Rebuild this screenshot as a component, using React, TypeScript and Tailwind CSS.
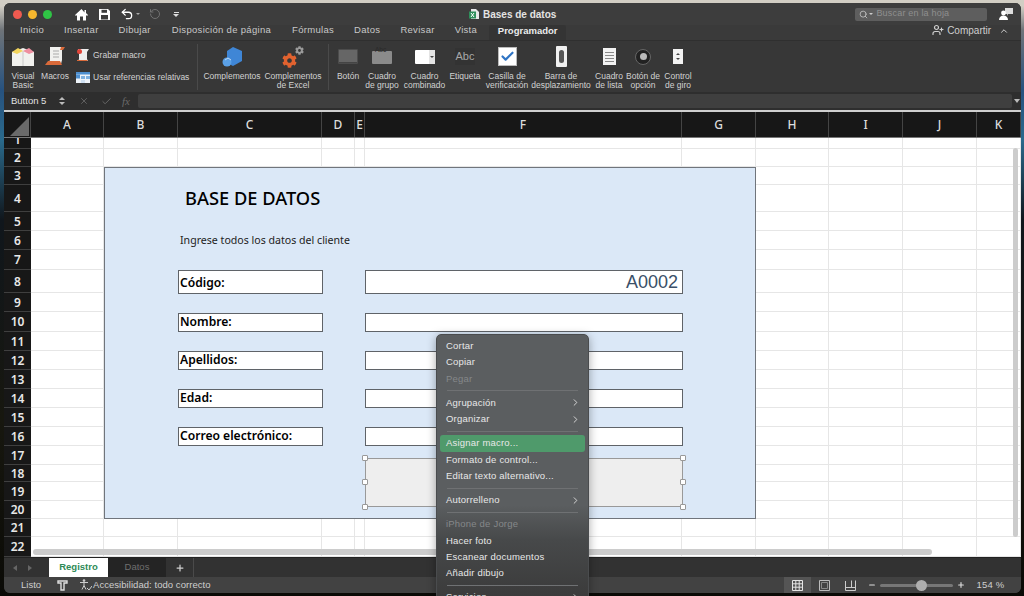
import { Undo2, RotateCcw, Search, ChevronUp, ChevronRight, X, Check, Plus, Minus, UserPlus } from "lucide-react";
import { FaCog } from "react-icons/fa";
import type { ReactNode } from "react";

const colsLabels: [string, string][] = [
  ["A", "w-[73px]"], ["B", "w-[74px]"], ["C", "w-[144px]"], ["D", "w-[33px]"], ["E", "w-[10px]"], ["F", "w-[317px]"],
  ["G", "w-[74px]"], ["H", "w-[73px]"], ["I", "w-[74px]"], ["J", "w-[74px]"], ["K", "w-[44px]"],
];
const rowH = [11, 18, 18, 27, 19, 19, 20, 23, 19, 20, 19, 19, 19, 19, 19, 19, 19, 17, 19, 18, 18, 20];

function Rib({ w, ml, icon, children }: { w: string; ml: string; icon: ReactNode; children: ReactNode }) {
  return (
    <div className={`${w} ${ml} flex flex-col items-center shrink-0`}>
      <div className="h-[31px] flex items-center justify-center w-full">{icon}</div>
      <div className="text-center text-[8.5px] leading-[9px] text-[#d2d2d2] whitespace-nowrap">{children}</div>
    </div>
  );
}

const Sep = () => <div className="h-[8px] flex items-center px-[10px]"><div className="h-px w-full bg-[#6f7173]" /></div>;
function MI({ t, dim, arrow, on }: { t: string; dim?: boolean; arrow?: boolean; on?: boolean }) {
  return (
    <div className={`h-[16.25px] mx-[3px] pl-[6px] pr-[4px] flex items-center justify-between text-[9.5px] tracking-[0.2px] rounded-[3px] ${dim ? "text-[#85888a]" : "text-[#e8e8e8]"} ${on ? "bg-[#4f9a6b]" : ""}`}>
      <span>{t}</span>
      {arrow && <ChevronRight size={11} strokeWidth={2} className="text-[#dddddd]" />}
    </div>
  );
}
const Handle = ({ c }: { c: string }) => <div className={`absolute w-[6px] h-[6px] bg-white border border-[#999] rounded-[1px] ${c}`} />;

function Field({ label, mt, h, value, lp = "" }: { label: string; mt: string; h: string; value?: string; lp?: string }) {
  return (
    <div className={`flex ${mt} ${h} ml-[73px]`}>
      <div className={`w-[145px] bg-white border border-[#5f6368] flex items-center pl-[1px] text-[12.1px] font-semibold text-black ${lp}`}>{label}</div>
      <div className="ml-[42px] w-[318px] bg-white border border-[#5f6368] flex items-center justify-end pr-[4px] text-[18px] text-[#3a5068] font-['Liberation_Sans',sans-serif]">{value}</div>
    </div>
  );
}

export default function App() {
  return (
    <div className="relative w-[1024px] h-[596px] overflow-hidden bg-[linear-gradient(180deg,#d2cec4_0px,#d2cec4_6px,#6f7479_30px,#27527f_90px,#2a6a8c_140px,#10161c_220px,#17170f_420px,#0a0a06_596px)] font-['Liberation_Sans',sans-serif] pt-[3px] pl-[4px]">
      <div className="w-[1017px] h-[590px] rounded-[6px] overflow-hidden bg-[#393939] flex flex-col">
        {/* Title bar */}
        <div className="h-[22px] shrink-0 bg-[#3d3d3d] flex items-center">
          <div className="ml-[9px] w-[9px] h-[9px] rounded-full bg-[#ef5a50]" />
          <div className="ml-[6px] w-[9px] h-[9px] rounded-full bg-[#f5b62e]" />
          <div className="ml-[6px] w-[9px] h-[9px] rounded-full bg-[#2fc445]" />
          <svg width="13" height="13" viewBox="0 0 13 13" className="ml-[23px] shrink-0"><path d="M6.5 1L0 7l1 1 1-.9V12.5h3V8.5h3v4h3V7.1l1 .9 1-1-2-1.9V2H9.5v2.5z" fill="#fff" /></svg>
          <svg width="13" height="13" viewBox="0 0 13 13" className="ml-[10px] shrink-0"><path d="M1 1h9l2 2v9H1z" fill="#fff" /><rect x="3.5" y="1.8" width="5.5" height="3" fill="#3d3d3d" /><rect x="3" y="7" width="7" height="4.5" fill="#3d3d3d" /></svg>
          <Undo2 size={14} strokeWidth={2.2} className="ml-[9px] text-white" />
          <div className="ml-[2px] w-0 h-0 border-x-[2px] border-x-transparent border-t-[2px] border-t-[#aaa]" />
          <RotateCcw size={12} strokeWidth={1.8} className="ml-[9px] text-[#777]" />
          <div className="ml-[12px] flex flex-col gap-[1px] items-center">
            <div className="w-[5px] h-px bg-[#ddd]" />
            <div className="w-0 h-0 border-x-[3px] border-x-transparent border-t-[3px] border-t-[#ddd]" />
          </div>
          <svg width="11" height="12" viewBox="0 0 11 12" className="ml-[290px] shrink-0">
            <path d="M2 1h5l3 3v7H2z" fill="#e8e8e8" /><rect x="0" y="3.5" width="7" height="7" fill="#2f8f5b" /><path d="M2 5l3 4M5 5L2 9" stroke="#fff" />
          </svg>
          <div className="ml-[3px] text-[10px] font-bold text-[#e4e4e4] whitespace-nowrap">Bases de datos</div>
          <div className="ml-[299px] w-[132px] h-[13px] bg-[#5e5e5e] rounded-[2px] flex items-center pl-[4px]">
            <Search size={9} strokeWidth={2} className="text-[#d0d0d0]" />
            <div className="ml-[1px] w-0 h-0 border-x-[2px] border-x-transparent border-t-[2px] border-t-[#ccc]" />
            <span className="ml-[3px] text-[9px] tracking-[0.2px] text-[#8f8f8f] whitespace-nowrap">Buscar en la hoja</span>
          </div>
          <svg width="14" height="14" viewBox="0 0 14 14" className="ml-[12px]">
            <path d="M6 1h8v6H9L8 9V7H6z" fill="#ddd" /><circle cx="4.5" cy="6" r="2.4" fill="#fff" /><path d="M0 13c0-3 2-4.5 4.5-4.5S9 10 9 13z" fill="#fff" />
          </svg>
        </div>
        {/* Tabs */}
        <div className="h-[15px] shrink-0 bg-[#3a3a3a] flex items-center text-[9.5px] tracking-[0.3px] text-[#c8c8c8]">
          <div className="ml-[16px] pb-[4px]">Inicio</div>
          <div className="ml-[20px] pb-[4px]">Insertar</div>
          <div className="ml-[20px] pb-[4px]">Dibujar</div>
          <div className="ml-[21px] pb-[4px] whitespace-nowrap">Disposición de página</div>
          <div className="ml-[21px] pb-[4px]">Fórmulas</div>
          <div className="ml-[20px] pb-[4px]">Datos</div>
          <div className="ml-[20px] pb-[4px]">Revisar</div>
          <div className="ml-[20px] pb-[4px]">Vista</div>
          <div className="ml-[12px] w-[77px] h-full bg-[#343434] flex items-center justify-center rounded-t-[2px] font-bold tracking-normal text-[#ececec] pb-[3px]">Programador</div>
          <UserPlus size={12} strokeWidth={2.4} className="ml-[366px] mb-[5px] text-[#cfcfcf] shrink-0" />
          <div className="ml-[3px] pb-[5px] text-[10px] tracking-normal text-[#cfcfcf]">Compartir</div>
          <ChevronUp size={10} strokeWidth={2.4} className="ml-[8px] mb-[4px] text-[#cfcfcf] shrink-0" />
        </div>
        {/* Ribbon */}
        <div className="h-[52px] shrink-0 bg-[#373737] border-t border-[#2f2f2f] flex items-start">
          <Rib w="w-[26px]" ml="ml-[6px]" icon={
            <svg width="24" height="21" viewBox="0 0 24 21"><path d="M1 6l11-4 11 4v14H1z" fill="#f1f1ee" /><path d="M12 5v15" stroke="#c9c9c9" /><path d="M1 6l6-4 5 3-6 3z" fill="#f2d45c" /><path d="M23 6l-5-4-6 3 6 3z" fill="#ef8fa0" /></svg>
          }>Visual<br />Basic</Rib>
          <Rib w="w-[30px]" ml="ml-[4px]" icon={
            <svg width="22" height="21" viewBox="0 0 22 21"><path d="M6 1h14l-2 3v10l-1 4H4l2-4z" fill="#f0f0ee" /><path d="M9 5h6M9 8h6M9 11h6" stroke="#aaa" /><path d="M1 19l3-4h12l2 4z" fill="#d96a3a" /><path d="M17 1h4l-2 3h-3z" fill="#d96a3a" /></svg>
          }><span className="block">Macros</span></Rib>
          <div className="ml-[6px] w-[112px] shrink-0 text-[8.5px] text-[#d2d2d2]">
            <div className="h-[22px] mt-[3px] flex items-center">
              <svg width="14" height="14" viewBox="0 0 14 14" className="shrink-0"><path d="M2 1h11l-2 3v7l1 2H2l1-2V4z" fill="#eee" /><circle cx="3.5" cy="3.5" r="2.5" fill="#e0453a" /><path d="M1 12h10l1 1H1z" fill="#d96a3a" /></svg>
              <span className="ml-[3px]">Grabar macro</span>
            </div>
            <div className="h-[22px] flex items-center whitespace-nowrap">
              <svg width="14" height="11" viewBox="0 0 14 11" className="shrink-0"><rect width="14" height="11" fill="#eef3f9" /><rect width="14" height="2.5" fill="#4d8fd0" /><rect x="0" y="2.5" width="4" height="4" fill="#4d8fd0" /><rect x="5" y="4" width="4" height="3" fill="#7fb1e0" /><rect x="10" y="4" width="4" height="3" fill="#7fb1e0" /><rect x="5" y="8" width="4" height="3" fill="#cfe0f2" /></svg>
              <span className="ml-[3px]">Usar referencias relativas</span>
            </div>
          </div>
          <div className="ml-[9px] w-px h-[46px] mt-[3px] bg-[#4a4a4a] shrink-0" />
          <Rib w="w-[56px]" ml="ml-[6px]" icon={
            <svg width="21" height="22" viewBox="0 0 21 22"><path d="M11 1l9 4v10l-9 5-6-3V5z" fill="#3f86d6" /><circle cx="5" cy="16" r="4.5" fill="#5aa0e6" /><path d="M3 14l3-2 3 2" stroke="#d7e7f7" strokeWidth="0.8" fill="none" /></svg>
          }>Complementos</Rib>
          <Rib w="w-[56px]" ml="ml-[5px]" icon={
            <div className="relative w-[22px] h-[22px]">
              <FaCog size={15} className="absolute left-0 bottom-0 text-[#e1622f]" />
              <FaCog size={9} className="absolute right-0 top-0 text-[#9a9a9a]" />
            </div>
          }>Complementos<br />de Excel</Rib>
          <div className="ml-[7px] w-px h-[46px] mt-[3px] bg-[#4a4a4a] shrink-0" />
          <Rib w="w-[24px]" ml="ml-[7px]" icon={<div className="w-[20px] h-[15px] bg-[#666] rounded-[1px] border border-[#4c4c4c] shadow-[inset_0_-1px_0_#444]" />}>Botón</Rib>
          <Rib w="w-[36px]" ml="ml-[4px]" icon={
            <div className="relative w-[20px] h-[13px] mt-[2px] bg-[#8b8b8b] rounded-[1px]">
              <span className="absolute -top-[5px] left-[3px] text-[6.5px] leading-[7px] text-[#2a2a2a]">Abc</span>
            </div>
          }>Cuadro<br />de grupo</Rib>
          <Rib w="w-[41px]" ml="ml-[4px]" icon={
            <div className="w-[20px] h-[14px] bg-white flex justify-end items-center rounded-[1px]">
              <div className="w-[6px] h-full bg-[#e4e4e4] flex items-center justify-center"><div className="w-0 h-0 border-x-[2px] border-x-transparent border-t-[2px] border-t-[#444]" /></div>
            </div>
          }>Cuadro<br />combinado</Rib>
          <Rib w="w-[32px]" ml="ml-[4px]" icon={<div className="text-[11px] text-[#a8a8a8] bg-[#333] px-[1px]">Abc</div>}>Etiqueta</Rib>
          <Rib w="w-[44px]" ml="ml-[4px]" icon={
            <div className="w-[19px] h-[19px] bg-white border border-[#bbb] flex items-center justify-center"><Check size={15} strokeWidth={3.4} className="text-[#2f74c4]" /></div>
          }>Casilla de<br />verificación</Rib>
          <Rib w="w-[58px]" ml="ml-[3px]" icon={
            <div className="w-[11px] h-[21px] bg-[#f0f0f0] flex items-center justify-center rounded-[1px]"><div className="w-[5px] h-[13px] bg-[#555] rounded-full" /></div>
          }>Barra de<br />desplazamiento</Rib>
          <Rib w="w-[30px]" ml="ml-[4px]" icon={
            <div className="w-[13px] h-[17px] bg-[#f2f2f2] flex flex-col justify-center gap-[2px] px-[2px]">
              <div className="h-px bg-[#888]" /><div className="h-px bg-[#888]" /><div className="h-px bg-[#888]" /><div className="h-px bg-[#888]" />
            </div>
          }>Cuadro<br />de lista</Rib>
          <Rib w="w-[34px]" ml="ml-[2px]" icon={
            <div className="w-[16px] h-[16px] rounded-full bg-[#222] border border-[#666] flex items-center justify-center"><div className="w-[7px] h-[7px] rounded-full bg-[#bbb]" /></div>
          }>Botón de<br />opción</Rib>
          <Rib w="w-[32px]" ml="ml-[2px]" icon={
            <div className="w-[10px] h-[15px] bg-[#f2f2f2] flex flex-col items-center justify-center gap-[3px]">
              <div className="w-0 h-0 border-x-[2px] border-x-transparent border-b-[2px] border-b-[#444]" />
              <div className="w-0 h-0 border-x-[2px] border-x-transparent border-t-[2px] border-t-[#444]" />
            </div>
          }>Control<br />de giro</Rib>
        </div>
        {/* Formula bar */}
        <div className="h-[18px] shrink-0 bg-[#2e2e2e] flex items-center">
          <div className="w-[48px] pl-[7px] text-[9.5px] text-[#e2e2e2] whitespace-nowrap">Button 5</div>
          <div className="ml-[7px] flex flex-col gap-[2px]">
            <div className="w-0 h-0 border-x-[3px] border-x-transparent border-b-[3px] border-b-[#bbb]" />
            <div className="w-0 h-0 border-x-[3px] border-x-transparent border-t-[3px] border-t-[#bbb]" />
          </div>
          <X size={10} strokeWidth={2} className="ml-[14px] text-[#6a6a6a]" />
          <Check size={11} strokeWidth={2} className="ml-[12px] text-[#6a6a6a]" />
          <span className="ml-[10px] w-[12px] text-[11px] italic font-['Liberation_Serif',serif] text-[#6a6a6a]">fx</span>
          <div className="ml-[4px] w-[874px] h-[14px] bg-[#3f3f3f] rounded-[2px]" />
          <div className="ml-[2px] w-0 h-0 border-x-[3px] border-x-transparent border-t-[4px] border-t-[#bbb]" />
        </div>
        <div className="h-[2px] shrink-0 bg-[#cfcfcf]" />
        {/* Column headers */}
        <div className="h-[26px] shrink-0 bg-[#171717] flex border-b border-[#777]">
          <div className="w-[27px] shrink-0 border-r border-[#444] flex items-end justify-end pb-[1px] pr-[1px]">
            <div className="w-0 h-0 border-l-[19px] border-l-transparent border-b-[19px] border-b-[#6a6a6a]" />
          </div>
          {colsLabels.map(([l, w]) => (
            <div key={l} className={`${w} shrink-0 border-r border-[#444] flex items-center justify-center text-[12px] font-medium text-[#dddddd] font-['Noto_Sans',sans-serif]`}>{l}</div>
          ))}
        </div>
        {/* Sheet */}
        <div className="relative h-[419px] shrink-0 bg-white overflow-hidden">
          {rowH.map((h, i) => (
            <div key={i} className="flex" style={{ height: h }}>
              <div className="w-[27px] shrink-0 bg-[#171717] border-b border-[#3f3f3f] flex items-center justify-center overflow-hidden text-[12px] font-semibold text-[#e8e8e8] font-['Noto_Sans',sans-serif]">
                <span className={i === 0 ? "-mt-[6px]" : "pt-[1px]"}>{i + 1}</span>
              </div>
              {colsLabels.map(([l, w]) => (
                <div key={l} className={`${w} shrink-0 border-r border-b border-[#e6e6e6]`} />
              ))}
            </div>
          ))}
          {/* Form shape floating over the sheet */}
          <div className="absolute left-[100px] top-[29px] w-[652px] h-[352px] bg-[#dbe8f7] border border-[#70757c] font-['Noto_Sans',sans-serif]">
            <div className="mt-[17px] ml-[80px] h-[26px] flex items-center text-[18.3px] font-medium text-black whitespace-nowrap">BASE DE DATOS</div>
            <div className="mt-[21px] ml-[75px] h-[18px] flex items-center text-[10.6px] text-[#222] whitespace-nowrap">Ingrese todos los datos del cliente</div>
            <Field label="Código:" mt="mt-[20px]" h="h-[24px]" value="A0002" lp="pt-[3px]" />
            <Field label="Nombre:" mt="mt-[19px]" h="h-[19px]" />
            <Field label="Apellidos:" mt="mt-[19px]" h="h-[19px]" />
            <Field label="Edad:" mt="mt-[19px]" h="h-[19px]" />
            <Field label="Correo electrónico:" mt="mt-[19px]" h="h-[19px]" />
            <div className="relative mt-[12px] ml-[260px] w-[318px] h-[49px] bg-[#eeeeee] border border-[#999]">
              <Handle c="-left-[4px] -top-[4px]" />
              <Handle c="-right-[4px] -top-[4px]" />
              <Handle c="-left-[4px] top-[20px]" />
              <Handle c="-right-[4px] top-[20px]" />
              <Handle c="-left-[4px] -bottom-[4px]" />
              <Handle c="-right-[4px] -bottom-[4px]" />
            </div>
          </div>
          {/* Scrollbars */}
          <div className="absolute left-[1009px] top-[10px] w-[5px] h-[389px] rounded-full bg-[#cccccc]" />
          <div className="absolute left-[29px] top-[411px] w-[899px] h-[6px] rounded-full bg-[#cccccc]" />
        </div>
        {/* Sheet tabs */}
        <div className="h-[20px] shrink-0 bg-[#323232] flex items-stretch border-t border-[#222]">
          <div className="ml-[9px] w-[36px] flex items-center gap-[11px]">
            <div className="w-0 h-0 border-y-[3px] border-y-transparent border-r-[4px] border-r-[#666]" />
            <div className="w-0 h-0 border-y-[3px] border-y-transparent border-l-[4px] border-l-[#666]" />
          </div>
          <div className="w-[59px] bg-white flex items-center justify-center text-[9.5px] font-bold text-[#2e8b57]">Registro</div>
          <div className="w-[58px] bg-[#242424] flex items-center justify-center text-[9.5px] text-[#6f6f6f]">Datos</div>
          <div className="w-[28px] border-r border-[#4a4a4a] flex items-center justify-center pl-[1px]"><Plus size={10} strokeWidth={3} className="text-[#cfcfcf]" /></div>
        </div>
        {/* Status bar */}
        <div className="h-[16px] shrink-0 bg-[#424242] flex items-center text-[9.5px] text-[#cfcfcf]">
          <span className="ml-[17px] w-[20px]">Listo</span>
          <svg width="11" height="11" viewBox="0 0 11 11" className="ml-[16px] shrink-0"><path d="M1 1h9v2H7v7H4V3H1z" fill="none" stroke="#e0e0e0" strokeWidth="1.4" /></svg>
          <svg width="13" height="12" viewBox="0 0 13 12" className="ml-[11px] shrink-0"><circle cx="5" cy="1.6" r="1.3" fill="#ccc" /><path d="M1 3.5h8M5 3.5v3l-2 4M5 6.5l2 4M8 9l2 2 3-4" fill="none" stroke="#ccc" /></svg>
          <span className="ml-[1px] tracking-[0.05px] whitespace-nowrap">Accesibilidad: todo correcto</span>
          <div className="ml-[573px] w-[27px] h-full bg-[#555] flex items-center justify-center shrink-0">
            <svg width="11" height="11" viewBox="0 0 11 11"><path d="M.5.5h10v10H.5zM.5 3.8h10M.5 7.2h10M3.8.5v10M7.2.5v10" fill="none" stroke="#e5e5e5" /></svg>
          </div>
          <svg width="11" height="11" viewBox="0 0 11 11" className="ml-[8px] shrink-0"><path d="M.5.5h10v10H.5z" fill="none" stroke="#bbb" /><path d="M2.5 2.5h6v6h-6z" fill="none" stroke="#888" /></svg>
          <svg width="11" height="11" viewBox="0 0 11 11" className="ml-[15px] shrink-0"><path d="M.5 1v9.5h10V.5M.5 7.5h10M6.5.5v7" fill="none" stroke="#ccc" /></svg>
          <Minus size={8} strokeWidth={3.5} className="ml-[12px] text-[#ddd] shrink-0" />
          <div className="relative ml-[4px] w-[73px] h-[3px] rounded-full bg-[#777] shrink-0">
            <div className="absolute left-[36px] -top-[4px] w-[11px] h-[11px] rounded-full bg-[#aeaeae]" />
          </div>
          <Plus size={8} strokeWidth={3.5} className="ml-[4px] text-[#ddd] shrink-0" />
          <span className="ml-[12px] tracking-[0.2px] whitespace-nowrap">154 %</span>
        </div>
      </div>
      {/* Context menu */}
      <div className="absolute left-[436px] top-[334px] w-[153px] h-[270px] pt-[3px] rounded-[5px] border border-[#4a4c4e] bg-[linear-gradient(180deg,#5b5e60_0px,#5b5e60_170px,#47494a_205px,#3b3b3b_262px)] shadow-[0_2px_10px_rgba(0,0,0,0.35)]">
        <MI t="Cortar" />
        <MI t="Copiar" />
        <MI t="Pegar" dim />
        <Sep />
        <MI t="Agrupación" arrow />
        <MI t="Organizar" arrow />
        <Sep />
        <MI t="Asignar macro..." on />
        <MI t="Formato de control..." />
        <MI t="Editar texto alternativo..." />
        <Sep />
        <MI t="Autorrelleno" arrow />
        <Sep />
        <MI t="iPhone de Jorge" dim />
        <MI t="Hacer foto" />
        <MI t="Escanear documentos" />
        <MI t="Añadir dibujo" />
        <Sep />
        <MI t="Servicios" arrow />
      </div>
    </div>
  );
}
